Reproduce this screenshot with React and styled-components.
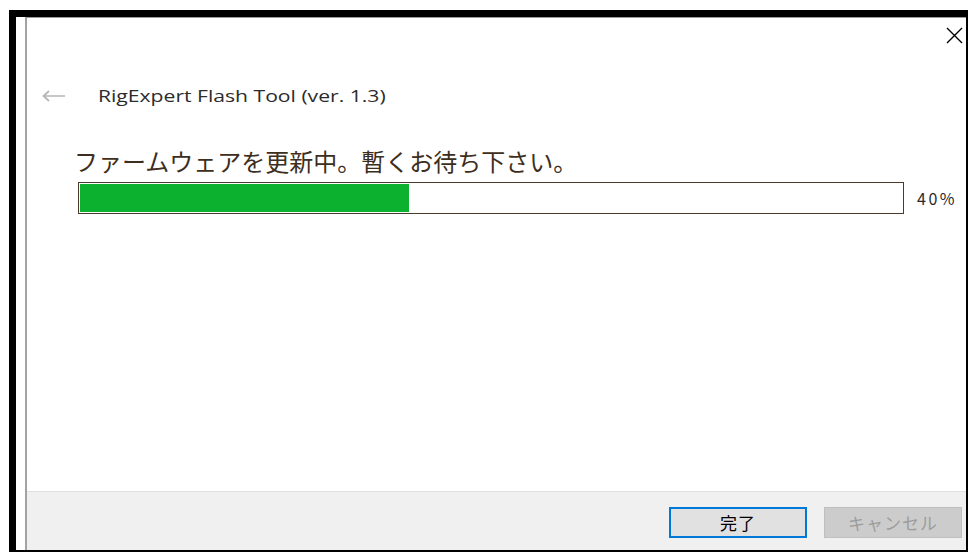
import styled, { createGlobalStyle } from "styled-components";

const GlobalStyle = createGlobalStyle`
  html, body {
    margin: 0;
    padding: 0;
    background: #ffffff;
  }
  body {
    font-family: "Open Sans", "Noto Sans CJK JP", sans-serif;
  }
`;

// black capture frame round the dialog
const Frame = styled.div`
  box-sizing: border-box;
  margin: 10px 0 0 9px;
  width: 959px;
  height: 542px;
  border-style: solid;
  border-color: #000;
  border-width: 7px 2px 2px 7px;
  padding-left: 9px;
  display: flex;
`;

const Window = styled.div`
  flex: 1;
  display: flex;
  flex-direction: column;
  border-left: 2px solid #a3a3a3;
  border-top: 1px solid #9a9a9a;
  background: #fff;
`;

const Body = styled.div`
  flex: 1;
  display: flex;
  flex-direction: column;
`;

const TopBar = styled.div`
  display: flex;
  justify-content: flex-end;
  padding: 9px 3px 0 0;
`;

const CloseButton = styled.button`
  border: 0;
  padding: 0;
  background: transparent;
  width: 17px;
  height: 17px;
  display: flex;
  color: #000;
`;

const Header = styled.div`
  display: flex;
  align-items: center;
  gap: 32px;
  padding-left: 15px;
  margin-top: 38px;
  height: 28px;
`;

const BackArrow = styled.svg`
  width: 24px;
  height: 12px;
  color: #b5b5b5;
`;

const Title = styled.span`
  display: inline-block;
  font-family: "Open Sans", "Noto Sans", sans-serif;
  font-size: 16px;
  color: #2b2b2b;
  transform: scaleX(1.32);
  transform-origin: left center;
`;

const Content = styled.div`
  padding-left: 47px;
  margin-top: 35px;
`;

const Message = styled.div`
  font-family: "Noto Sans CJK JP", sans-serif;
  font-size: 24px;
  line-height: 32px;
  color: #3d2e20;
`;

const ProgressRow = styled.div`
  display: flex;
  align-items: center;
  gap: 13px;
  margin: 5px 0 0 4px;
`;

const Track = styled.div`
  box-sizing: border-box;
  flex: none;
  width: 826px;
  height: 32px;
  border: 1px solid #4a3a2b;
  padding: 1px;
  background: #fff;
`;

const Fill = styled.div`
  height: 100%;
  background: #0bb12f;
`;

const Percent = styled.span`
  font-family: "Noto Sans CJK JP", sans-serif;
  font-size: 16px;
  letter-spacing: 2.5px;
  color: #2a2a2a;
`;

const Footer = styled.div`
  height: 59px;
  box-sizing: border-box;
  border-top: 1px solid #dfdfdf;
  background: #f0f0f0;
  display: flex;
  justify-content: flex-end;
  align-items: flex-start;
  gap: 17px;
  padding: 15px 4px 0 0;
`;

const Button = styled.button`
  box-sizing: border-box;
  width: 138px;
  height: 31px;
  font-family: "Noto Sans CJK JP", sans-serif;
  font-size: 17px;
  letter-spacing: 1px;
  padding: 0;
  background: ${(p) => (p.$primary ? "#e1e1e1" : "#cccccc")};
  border: ${(p) => (p.$primary ? "2px solid #0078d7" : "1px solid #bfbfbf")};
  color: ${(p) => (p.$primary ? "#000" : "#9c9c9c")};
`;

function ProgressBar({ value }) {
  return (
    <ProgressRow>
      <Track>
        <Fill style={{ width: `${value}%` }} />
      </Track>
      <Percent>{value}%</Percent>
    </ProgressRow>
  );
}

export default function App() {
  return (
    <>
      <GlobalStyle />
      <Frame>
        <Window>
          <Body>
            <TopBar>
              <CloseButton aria-label="close">
                <svg width="17" height="17" viewBox="0 0 17 17">
                  <path
                    d="M1 1 L16 16 M16 1 L1 16"
                    stroke="currentColor"
                    strokeWidth="1.4"
                    fill="none"
                  />
                </svg>
              </CloseButton>
            </TopBar>
            <Header>
              <BackArrow viewBox="0 0 24 12">
                <path
                  d="M1.5 6 H23 M7 1 L1.5 6 L7 11"
                  stroke="currentColor"
                  strokeWidth="1.7"
                  fill="none"
                />
              </BackArrow>
              <Title>RigExpert Flash Tool (ver. 1.3)</Title>
            </Header>
            <Content>
              <Message>ファームウェアを更新中。暫くお待ち下さい。</Message>
              <ProgressBar value={40} />
            </Content>
          </Body>
          <Footer>
            <Button $primary>完了</Button>
            <Button disabled>キャンセル</Button>
          </Footer>
        </Window>
      </Frame>
    </>
  );
}
